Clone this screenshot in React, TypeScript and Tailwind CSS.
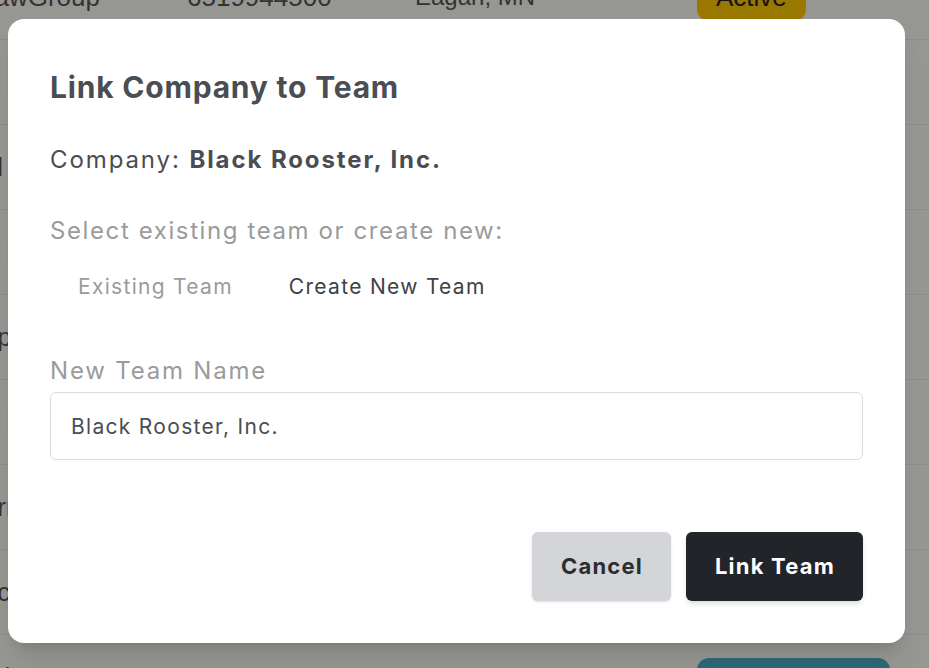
import React from "react";

const rows = [
  { name: "LawGroup", phone: "6519944500", city: "Eagan, MN" },
  { name: "M Partners", phone: "6125550142", city: "Edina, MN" },
  { name: "Al Brothers", phone: "6125550177", city: "Plymouth, MN" },
  { name: "M Group", phone: "7635550123", city: "Blaine, MN" },
  { name: "Apex", phone: "9525550190", city: "Eden Prairie, MN" },
  { name: "M Holdings", phone: "6515550111", city: "Woodbury, MN" },
  { name: "Arrow", phone: "6515550166", city: "St. Paul, MN" },
  { name: "Acme", phone: "6125550104", city: "Minneapolis, MN" },
  { name: "Atlas", phone: "6125550188", city: "Bloomington, MN" },
];

function BackgroundTable() {
  return (
    <div className="mt-[-45px] font-['Liberation_Sans',Arial,sans-serif] text-[26px] text-[#555]">
      {rows.map((r, i) => (
        <div
          key={i}
          className="flex h-[85px] items-center border-b border-[#ececec]"
        >
          <div className="-ml-[20px] w-[207px] shrink-0 whitespace-nowrap">{r.name}</div>
          <div className="w-[228px] shrink-0">{r.phone}</div>
          <div className="w-[282px] shrink-0 whitespace-nowrap text-[24px]">{r.city}</div>
          {i === 0 && (
            <span className="rounded-xl bg-[#ffc800] px-[19px] py-[4px] text-[#222]">
              Active
            </span>
          )}
          {i === 8 && (
            <span className="h-[38px] w-[193px] rounded-xl bg-[#4dadc8]" />
          )}
        </div>
      ))}
    </div>
  );
}

function App() {
  return (
    <div className="relative h-[668px] w-[929px] overflow-hidden bg-[#fbfbf4]">
      <BackgroundTable />

      <div className="absolute inset-0 bg-black/40 pl-2 pt-[19px]">
        <div className="w-[897px] rounded-2xl bg-white px-[42px] pt-[50px] pb-[42px] font-['Inter',sans-serif] tracking-[1.5px] shadow-xl">
          <h2 className="text-[30px] leading-[36px] font-bold tracking-[0.8px] text-[#4a4e53]">
            Link Company to Team
          </h2>

          <p className="mt-[39px] text-[24px] leading-[32px] tracking-[1.9px] text-[#4a4d52]">
            Company: <span className="font-bold">Black Rooster, Inc.</span>
          </p>

          <p className="mt-[39px] text-[24px] leading-[32px] tracking-[1.6px] text-[#9a9b9c]">
            Select existing team or create new:
          </p>

          <div className="mt-[26px] flex text-[21px] leading-[28px] tracking-[1.3px]">
            <button className="px-7 text-[#9a9b9c]">Existing Team</button>
            <button className="px-7 text-[#3f4246]">Create New Team</button>
          </div>

          <label className="mt-[54px] block text-[24px] leading-[32px] tracking-[1.8px] text-[#9a9b9c]">
            New Team Name
          </label>
          <input
            type="text"
            defaultValue="Black Rooster, Inc."
            className="mt-[5px] block h-[68px] w-full rounded-md border border-[#dcdcdc] px-5 text-[21px] tracking-[1.3px] text-[#4a4d52] outline-none"
          />

          <div className="mt-[72px] flex justify-end gap-[15px]">
            <button className="h-[69px] rounded-md bg-[#d4d5d8] pl-[29px] pr-[28px] text-[22px] font-bold tracking-[1.2px] text-[#2a2d31] shadow-sm">
              Cancel
            </button>
            <button className="h-[69px] rounded-md bg-[#212429] pl-[29px] pr-[28px] text-[22px] font-bold tracking-[1.2px] text-white shadow-md">
              Link Team
            </button>
          </div>
        </div>
      </div>
    </div>
  );
}

export default App;
